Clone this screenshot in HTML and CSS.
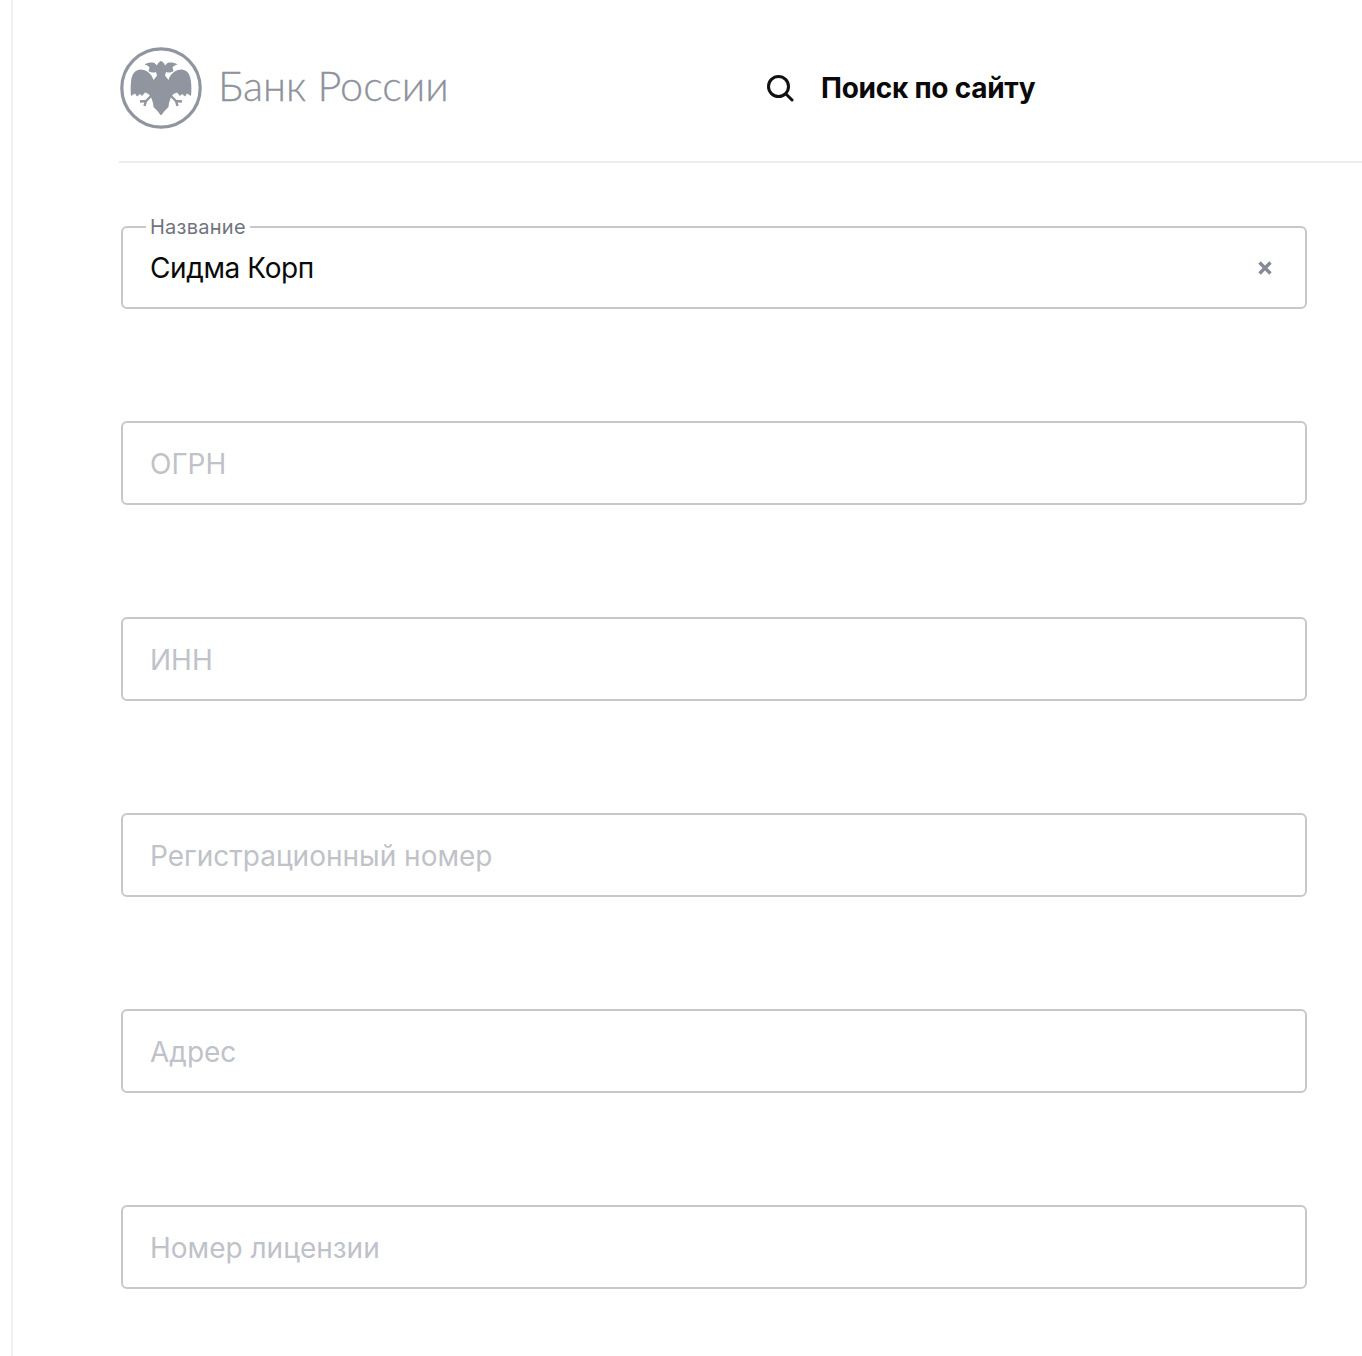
FILE: index.html
```html
<!DOCTYPE html>
<html lang="ru">
<head>
<meta charset="utf-8">
<title>Банк России</title>
<link rel="stylesheet" href="styles.css">
</head>
<body>
<div class="page">
  <header class="header">
    <a class="brand">
      <svg class="emblem" viewBox="0 0 82 82" aria-hidden="true">
        <circle class="emblem-ring" cx="41" cy="41" r="39.2"/>
        <g>
          <path class="emblem-fill" d="M41 14C38.800 15 37.500 16.500 37 18.500L34.500 16C31.500 15 28 15.500 24.500 17.500C27 18 28.500 19 29.500 20.500L28.500 24C30.500 25.500 33.500 26 36 25L37 28.500L33.500 33C32 27.500 27 22.500 20 22.500C14.500 23 11.500 28 11 35C10.500 40 10.500 44 11 49L15 46.500L17 49.500L20 47L22 49L25 45.500L28.500 47L31 50L33 56L33.500 60L37 63.500L41 68.500Z"/>
          <path class="emblem-claw" d="M31 49L26 54L20 54.500M26 54L24.500 59"/>
        </g>
        <g transform="matrix(-1 0 0 1 82 0)">
          <path class="emblem-fill" d="M41 14C38.800 15 37.500 16.500 37 18.500L34.500 16C31.500 15 28 15.500 24.500 17.500C27 18 28.500 19 29.500 20.500L28.500 24C30.500 25.500 33.500 26 36 25L37 28.500L33.500 33C32 27.500 27 22.500 20 22.500C14.500 23 11.500 28 11 35C10.500 40 10.500 44 11 49L15 46.500L17 49.500L20 47L22 49L25 45.500L28.500 47L31 50L33 56L33.500 60L37 63.500L41 68.500Z"/>
          <path class="emblem-claw" d="M31 49L26 54L20 54.500M26 54L24.500 59"/>
        </g>
      </svg>
      <span class="brand-name">Банк России</span>
    </a>
    <button class="search" type="button">
      <svg class="search-icon" viewBox="0 0 28 28" aria-hidden="true">
        <circle cx="12.500" cy="12.500" r="10"/>
        <path d="M20 20L26 26"/>
      </svg>
      <span>Поиск по сайту</span>
    </button>
  </header>
  <main class="form">
    <div class="field field-filled">
      <span class="field-label">Название</span>
      <span class="field-value">Сидма Корп</span>
      <svg class="clear" viewBox="0 0 14 14" aria-hidden="true"><path d="M1.500 1.500L12.500 12.500M12.500 1.500L1.500 12.500"/></svg>
    </div>
    <div class="field"><span class="field-placeholder">ОГРН</span></div>
    <div class="field"><span class="field-placeholder">ИНН</span></div>
    <div class="field"><span class="field-placeholder">Регистрационный номер</span></div>
    <div class="field"><span class="field-placeholder">Адрес</span></div>
    <div class="field"><span class="field-placeholder">Номер лицензии</span></div>
  </main>
</div>
</body>
</html>
```

FILE: styles.css
```css
* {
  box-sizing: border-box;
}

html,
body {
  margin: 0;
  background: #fff;
}

body {
  font-family: Inter, "Noto Sans", sans-serif;
  overflow: hidden;
}

.page {
  height: 1356px;
  margin-left: 11px;
  padding-left: 106px;
  border-left: 2px solid #efefef;
}

.header {
  display: flex;
  align-items: center;
  height: 163px;
  padding-left: 1px;
  padding-top: 15px;
  border-bottom: 2px solid #ececec;
}

.brand {
  display: flex;
  align-items: center;
  gap: 16px;
  width: 646px;
}

.emblem {
  width: 82px;
  height: 82px;
  flex: none;
}

.emblem-ring {
  fill: none;
  stroke: #9195a0;
  stroke-width: 3.200;
}

.emblem-fill {
  fill: #9195a0;
}

.emblem-claw {
  fill: none;
  stroke: #9195a0;
  stroke-width: 2.400;
}

.brand-name {
  padding-bottom: 4px;
  font-family: Lato, "Open Sans", sans-serif;
  font-weight: 300;
  font-size: 41.400px;
  line-height: 1;
  color: #8e929d;
  -webkit-text-stroke: 0.300px #8e929d;
}

.search {
  display: flex;
  align-items: center;
  gap: 27px;
  padding: 0;
  border: 0;
  background: none;
  font-family: inherit;
  font-size: 28px;
  font-weight: 700;
  letter-spacing: -0.250px;
  color: #0a0a0a;
}

.search-icon {
  width: 28px;
  height: 28px;
  fill: none;
  stroke: #111;
  stroke-width: 3;
  stroke-linecap: round;
}

.form {
  display: flex;
  flex-direction: column;
  gap: 112px;
  width: 1186px;
  margin-top: 63px;
  margin-left: 2px;
}

.field {
  position: relative;
  display: flex;
  align-items: center;
  justify-content: space-between;
  height: 84px;
  padding: 1px 33px 0 27px;
  border: 2px solid #c8c8c8;
  border-radius: 6px;
  font-size: 28px;
}

.field-filled {
  height: 83px;
}

.field-label {
  position: absolute;
  top: -13px;
  left: 23px;
  padding: 0 4px;
  background: #fff;
  font-size: 20px;
  line-height: 24px;
  letter-spacing: 0.250px;
  color: #70747e;
}

.field-value {
  letter-spacing: -0.400px;
  color: #0a0a0a;
}

.field-placeholder {
  color: #bfc2c9;
}

.clear {
  width: 14px;
  height: 14px;
  fill: none;
  stroke: #858a96;
  stroke-width: 3.400;
}
```
